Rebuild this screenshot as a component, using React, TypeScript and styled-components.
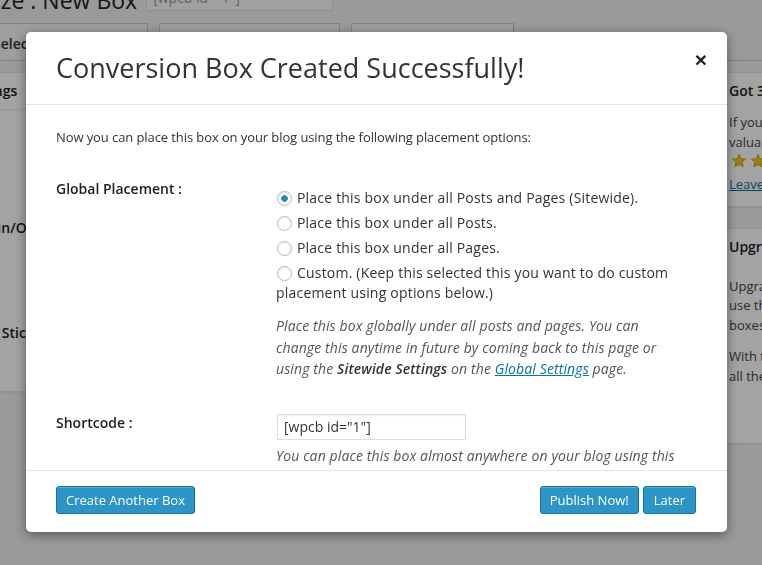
import React from "react";
import styled, { createGlobalStyle } from "styled-components";

const GlobalStyle = createGlobalStyle`
  html, body { margin: 0; padding: 0; }
  body {
    width: 762px;
    height: 565px;
    overflow: hidden;
    background: #f1f1f1;
    font-family: "Open Sans", "Noto Sans", sans-serif;
    color: #444;
  }
  * { box-sizing: border-box; }
`;

/* ---------- background admin page ---------- */
const Page = styled.div`
  width: 1060px;
  margin: -14px 0 0 -80px;
`;

const TitleRow = styled.div`
  display: flex;
  align-items: flex-start;
  gap: 9px;
  height: 28px;
`;

const PageTitle = styled.h1`
  margin: 0 0 0 -8px;
  font-size: 23px;
  font-weight: 400;
  line-height: 28px;
  color: #222;
  white-space: nowrap;
`;

const TitleInput = styled.div`
  margin-top: -2px;
  width: 187px;
  height: 27px;
  padding: 3px 6px;
  border: 1px solid #ddd;
  background: #fbfbfb;
  color: #999;
  font-size: 14px;
`;

const TabBar = styled.div`
  display: flex;
  gap: 11px;
  margin-top: 9px;
  padding-left: 60px;
  height: 38px;
  border-bottom: 1px solid #ccc;
`;

const Tab = styled.div<{ $w: number }>`
  width: ${(p) => p.$w}px;
  height: 37px;
  border: 1px solid #ccc;
  border-bottom: none;
  background: #f7f7f7;
  padding: 10px 12px;
  font-size: 14px;
  font-weight: 600;
  color: #333;
  white-space: nowrap;
  overflow: hidden;
`;

const MainRow = styled.div`
  display: flex;
  gap: 20px;
  margin-top: 11px;
  align-items: flex-start;
`;

const Postbox = styled.div<{ $w: number }>`
  width: ${(p) => p.$w}px;
  background: #fff;
  border: 1px solid #e5e5e5;
  box-shadow: 0 1px 1px rgba(0, 0, 0, 0.04);
`;

const PostboxTitle = styled.h3`
  margin: 0;
  padding: 8px 12px 8px 13px;
  font-size: 14px;
  font-weight: 600;
  line-height: 20px;
  color: #222;
  white-space: nowrap;
  border-bottom: 1px solid #eee;
`;

const FormRow = styled.div`
  display: grid;
  grid-template-columns: 230px 1fr;
  padding: 20px 0 20px 40px;
`;

const FormLabel = styled.div`
  font-size: 14px;
  font-weight: 600;
  line-height: 20px;
  color: #222;
  white-space: nowrap;
`;

const FormLink = styled.a`
  font-size: 13px;
  line-height: 20px;
  color: #0074a2;
  text-decoration: underline;
`;

const FormField = styled.div<{ $h: number }>`
  min-height: ${(p) => p.$h + 20}px;
`;

const Sidebar = styled.div`
  width: 264px;
  display: flex;
  flex-direction: column;
  gap: 21px;
`;

const SideTitle = styled.h3`
  margin: 0;
  padding: 8px 12px;
  font-size: 14px;
  font-weight: 600;
  line-height: 20px;
  color: #222;
  white-space: nowrap;
`;

const SideBody = styled.div<{ $top: number }>`
  padding: ${(p) => p.$top}px 12px 11px;
  font-size: 13px;
  line-height: 19.5px;
  color: #444;
`;

const SideText = styled.p`
  margin: 0 0 12px;
  white-space: nowrap;
  &:last-of-type { margin-bottom: 0; }
`;

const Stars = styled.div`
  display: flex;
  gap: 3px;
  height: 16px;
  align-items: center;
  padding-left: 2px;
  margin: 1px 0 6px;
`;

const SideLink = styled.a`
  color: #0074a2;
  text-decoration: underline;
`;

const UpgradeButton = styled.div`
  margin: 16px auto 0;
  width: 150px;
  height: 30px;
  border-radius: 3px;
  background: #2ea2cc;
  color: #fff;
  text-align: center;
  line-height: 30px;
`;

const Overlay = styled.div`
  position: fixed;
  inset: 0;
  background: rgba(0, 0, 0, 0.36);
`;

/* ---------- modal ---------- */
const Modal = styled.div`
  position: fixed;
  left: 26px;
  top: 32px;
  width: 701px;
  height: 500px;
  background: #fff;
  border-radius: 5px;
  box-shadow: 0 3px 12px rgba(0, 0, 0, 0.45);
  display: flex;
  flex-direction: column;
  overflow: hidden;
`;

const ModalHeader = styled.div`
  flex: none;
  height: 73px;
  border-bottom: 1px solid #e5e5e5;
  display: flex;
  justify-content: space-between;
  padding: 0 20px 0 30px;
`;

const ModalTitle = styled.h2`
  margin: 0;
  align-self: center;
  font-size: 27px;
  font-weight: 400;
  line-height: 36px;
  color: #333;
  white-space: nowrap;
`;

const CloseButton = styled.button`
  margin-top: 17px;
  align-self: flex-start;
  border: none;
  background: none;
  padding: 0;
  font-family: "Liberation Sans", Arial, sans-serif;
  font-size: 21px;
  font-weight: 700;
  line-height: 22px;
  color: #222;
  cursor: pointer;
`;

const ModalBody = styled.div`
  flex: 1;
  overflow: hidden;
  padding: 22px 30px 0;
  font-size: 14px;
  line-height: 20px;
  color: #444;
`;

const Intro = styled.p`
  margin: 0;
  font-size: 13px;
  letter-spacing: -0.09px;
  color: #333;
`;

const Row = styled.div<{ $gap: number }>`
  display: grid;
  grid-template-columns: 220px 1fr;
  margin-top: ${(p) => p.$gap}px;
`;

const RowLabel = styled.div`
  font-weight: 600;
  color: #222;
`;

const RowValue = styled.div<{ $pad?: number }>`
  padding-top: ${(p) => p.$pad ?? 0}px;
  max-width: 405px;
`;

const RadioList = styled.div`
  display: flex;
  flex-direction: column;
  gap: 5px;
`;

const RadioLabel = styled.label`
  display: block;
  color: #333;
  letter-spacing: 0.2px;
  cursor: pointer;
`;

const RadioInput = styled.input`
  appearance: none;
  -webkit-appearance: none;
  width: 15px;
  height: 15px;
  margin: 0 5px 0 1px;
  border-radius: 50%;
  border: 1px solid #b4b9be;
  background: #fff;
  box-shadow: inset 0 1px 2px rgba(0, 0, 0, 0.08);
  vertical-align: -3px;
  &:checked {
    background: radial-gradient(circle, #1e8cbe 0 3px, #fff 3.6px);
  }
`;

const Description = styled.p<{ $gap: number; $lh: number }>`
  margin: ${(p) => p.$gap}px 0 0;
  font-style: italic;
  letter-spacing: 0.12px;
  line-height: ${(p) => p.$lh}px;
  color: #555;
`;

const Strong = styled.strong`
  font-weight: 600;
  color: #333;
`;

const Link = styled.a`
  color: #0074a2;
  text-decoration: underline;
`;

const ShortcodeInput = styled.input`
  margin: 1px 0 0 1px;
  width: 189px;
  height: 26px;
  padding: 0 6px;
  border: 1px solid #ddd;
  box-shadow: inset 0 1px 2px rgba(0, 0, 0, 0.07);
  font-family: inherit;
  font-size: 14px;
  color: #333;
  outline: none;
`;

const ModalFooter = styled.div`
  flex: none;
  height: 62px;
  border-top: 1px solid #e5e5e5;
  padding: 15px 31px 0 30px;
  display: flex;
  justify-content: space-between;
  align-items: flex-start;
`;

const ButtonGroup = styled.div`
  display: flex;
  gap: 4px;
`;

const Button = styled.button<{ $pad?: number }>`
  height: 28px;
  padding: 0 ${(p) => p.$pad ?? 9}px;
  border: 1px solid #1471a3;
  border-radius: 3px;
  background: #2a95c6;
  box-shadow: inset 0 1px 0 rgba(120, 200, 230, 0.5);
  color: #fff;
  font-family: inherit;
  font-size: 13px;
  line-height: 26px;
  cursor: pointer;
  white-space: nowrap;
`;

const Star = () => (
  <svg width="16" height="16" viewBox="0 0 24 24">
    <path
      d="M12 2.2l2.9 6.3 6.9.7-5.2 4.6 1.5 6.8L12 17.1 5.9 20.6l1.5-6.8L2.2 9.2l6.9-.7z"
      fill="#f7c51b"
      stroke="#d39a0a"
      strokeWidth="1.4"
      strokeLinejoin="round"
    />
  </svg>
);

export default function App() {
  return (
    <>
      <GlobalStyle />
      <Page>
        <TitleRow>
          <PageTitle>Customize : New Box</PageTitle>
          <TitleInput>[wpcb id="1"]</TitleInput>
        </TitleRow>
        <TabBar>
          <Tab $w={168}>Select Template</Tab>
          <Tab $w={181}>Customize</Tab>
          <Tab $w={163}>Settings</Tab>
        </TabBar>
        <MainRow>
          <Postbox $w={776}>
            <PostboxTitle>Box Settings</PostboxTitle>
            <FormRow>
              <FormLink>Select</FormLink>
              <FormField $h={28} />
            </FormRow>
            <FormRow>
              <FormLabel>Fade In/Out</FormLabel>
              <FormField $h={45} />
            </FormRow>
            <FormRow>
              <FormLabel>Make Sticky</FormLabel>
              <FormField $h={28} />
            </FormRow>
          </Postbox>
          <Sidebar>
            <Postbox $w={264}>
              <SideTitle>Got 30 Seconds?</SideTitle>
              <SideBody $top={4}>
                <SideText>
                  If you like this plugin, please give it a
                  <br />
                  valuable rating on WordPress.org
                </SideText>
                <Stars>
                  <Star />
                  <Star />
                  <Star />
                  <Star />
                  <Star />
                </Stars>
                <SideLink>Leave a review</SideLink>
              </SideBody>
            </Postbox>
            <Postbox $w={264}>
              <SideTitle>Upgrade to Pro</SideTitle>
              <SideBody $top={12}>
                <SideText>
                  Upgrade to the Pro version to
                  <br />
                  use the advanced features and
                  <br />
                  boxes templates.
                </SideText>
                <SideText>
                  With the Pro version you get
                  <br />
                  all the premium templates.
                </SideText>
                <UpgradeButton>Upgrade Now</UpgradeButton>
              </SideBody>
            </Postbox>
          </Sidebar>
        </MainRow>
      </Page>
      <Overlay />
      <Modal>
        <ModalHeader>
          <ModalTitle>Conversion Box Created Successfully!</ModalTitle>
          <CloseButton aria-label="Close">×</CloseButton>
        </ModalHeader>
        <ModalBody>
          <Intro>Now you can place this box on your blog using the following placement options:</Intro>
          <Row $gap={32}>
            <RowLabel>Global Placement :</RowLabel>
            <RowValue $pad={9}>
              <RadioList>
                <RadioLabel>
                  <RadioInput type="radio" name="placement" defaultChecked />
                  Place this box under all Posts and Pages (Sitewide).
                </RadioLabel>
                <RadioLabel>
                  <RadioInput type="radio" name="placement" />
                  Place this box under all Posts.
                </RadioLabel>
                <RadioLabel>
                  <RadioInput type="radio" name="placement" />
                  Place this box under all Pages.
                </RadioLabel>
                <RadioLabel>
                  <RadioInput type="radio" name="placement" />
                  Custom. (Keep this selected this you want to do custom placement using options below.)
                </RadioLabel>
              </RadioList>
              <Description $gap={12} $lh={21.5}>
                Place this box globally under all posts and pages. You can change this anytime in future by
                coming back to this page or using the <Strong>Sitewide Settings</Strong> on the{" "}
                <Link>Global Settings</Link> page.
              </Description>
            </RowValue>
          </Row>
          <Row $gap={33}>
            <RowLabel>Shortcode :</RowLabel>
            <RowValue>
              <ShortcodeInput readOnly value='[wpcb id="1"]' />
              <Description $gap={6} $lh={20}>
                You can place this box almost anywhere on your blog using this shortcode. Just copy and
                paste it in any post, page or widget.
              </Description>
            </RowValue>
          </Row>
        </ModalBody>
        <ModalFooter>
          <Button>Create Another Box</Button>
          <ButtonGroup>
            <Button>Publish Now!</Button>
            <Button $pad={10}>Later</Button>
          </ButtonGroup>
        </ModalFooter>
      </Modal>
    </>
  );
}
